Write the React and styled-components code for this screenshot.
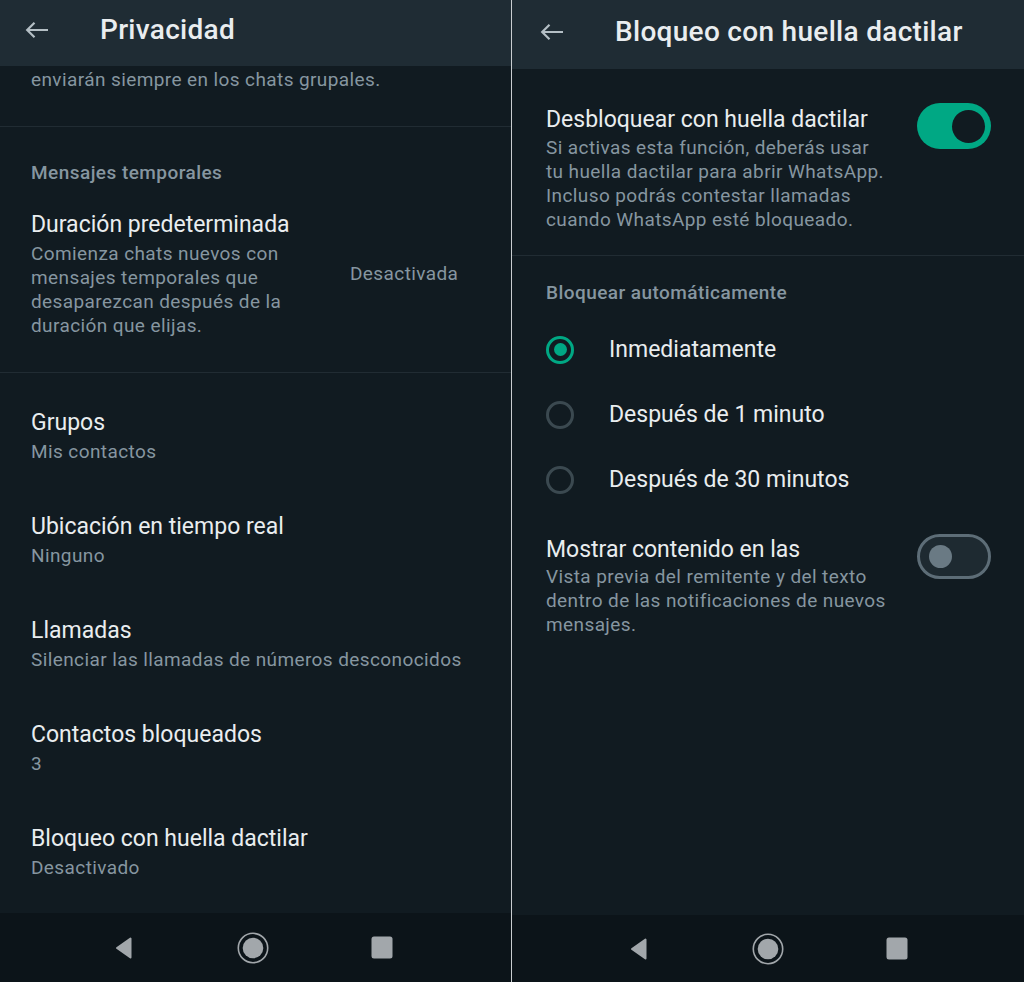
import React from "react";
import styled, { createGlobalStyle } from "styled-components";

const GlobalStyle = createGlobalStyle`
  html, body { margin: 0; padding: 0; background: #111b21; }
  body { font-family: Roboto, "Noto Sans", sans-serif; -webkit-font-smoothing: antialiased; }
`;

const Page = styled.div`
  display: flex;
  width: 1024px;
  height: 982px;
  overflow: hidden;
`;

const Screen = styled.div`
  display: flex;
  flex-direction: column;
  width: ${(p) => p.$w}px;
  flex: 0 0 ${(p) => p.$w}px;
  height: 100%;
  background: #111b21;
`;

const Seam = styled.div`
  flex: 0 0 1px;
  background: #c9cdd0;
`;

const AppBar = styled.header`
  display: flex;
  align-items: center;
  height: ${(p) => p.$h}px;
  flex: 0 0 ${(p) => p.$h}px;
  padding: 0 0 6px ${(p) => p.$pl}px;
  box-sizing: border-box;
  background: #1f2c34;
`;

const AppTitle = styled.h1`
  margin: 0 0 0 ${(p) => p.$gap}px;
  font-size: 28px;
  line-height: 34px;
  font-weight: 500;
  color: #e9edef;
  letter-spacing: 0.3px;
`;

const Body = styled.main`
  flex: 1;
  display: flex;
  flex-direction: column;
  overflow: hidden;
`;

const Rule = styled.div`
  height: 1px;
  background: #212c33;
`;

const Block = styled.section`
  padding: ${(p) => p.$pt}px ${(p) => p.$pr ?? p.$px}px ${(p) => p.$pb}px ${(p) => p.$px}px;
`;

const Secondary = styled.div`
  font-size: 19px;
  line-height: 24px;
  letter-spacing: 0.4px;
  color: #8696a0;
  margin-top: ${(p) => p.$mt || 0}px;
`;

const SectionLabel = styled.div`
  font-size: 19px;
  line-height: 24px;
  letter-spacing: 0.45px;
  font-weight: 500;
  color: #8696a0;
`;

const Primary = styled.div`
  font-size: 23px;
  line-height: 30px;
  color: #e9edef;
`;

const Row = styled.div`
  display: flex;
  align-items: ${(p) => p.$align || "center"};
  justify-content: space-between;
  margin-top: ${(p) => p.$mt || 0}px;
`;

const TextCol = styled.div`
  flex: 0 0 ${(p) => p.$w}px;
`;

const Value = styled.div`
  flex: 1;
  font-size: 19px;
  line-height: 24px;
  letter-spacing: 0.4px;
  color: #8696a0;
`;

const List = styled.div`
  padding-top: 11px;
`;

const ListItem = styled.div`
  padding: 24px 31px;
`;

const Options = styled.div`
  margin-top: 12px;
`;

const Track = styled.div`
  flex: 0 0 auto;
  display: flex;
  align-items: center;
  justify-content: ${(p) => (p.$on ? "flex-end" : "flex-start")};
  box-sizing: border-box;
  width: 74px;
  height: ${(p) => (p.$on ? 46 : 45)}px;
  border-radius: 23px;
  margin-top: ${(p) => p.$mt || 0}px;
  padding: ${(p) => (p.$on ? "0 6px" : "0 9px")};
  background: ${(p) => (p.$on ? "#00a884" : "#1e2a31")};
  border: ${(p) => (p.$on ? "none" : "3px solid #5d6d77")};
`;

const Knob = styled.div`
  width: ${(p) => (p.$on ? 33 : 23)}px;
  height: ${(p) => (p.$on ? 33 : 23)}px;
  border-radius: 50%;
  background: ${(p) => (p.$on ? "#111b21" : "#6a7a84")};
`;

const Toggle = ({ on, mt }) => (
  <Track $on={on} $mt={mt}>
    <Knob $on={on} />
  </Track>
);

const RadioRow = styled.div`
  display: flex;
  align-items: center;
  height: 65px;
  gap: 35px;
`;

const RadioRing = styled.div`
  box-sizing: border-box;
  width: 28px;
  height: 28px;
  border-radius: 50%;
  border: 3px solid ${(p) => (p.$on ? "#00a884" : "#3b4950")};
  display: flex;
  align-items: center;
  justify-content: center;
`;

const RadioDot = styled.div`
  width: 13px;
  height: 13px;
  border-radius: 50%;
  background: #00a884;
`;

const RadioLabel = styled.div`
  font-size: 23px;
  line-height: 30px;
  color: #e9edef;
`;

const NavBar = styled.nav`
  flex: 0 0 ${(p) => p.$h}px;
  height: ${(p) => p.$h}px;
  display: flex;
  align-items: center;
  justify-content: center;
  gap: 89px;
  padding-right: ${(p) => p.$shift || 0}px;
  box-sizing: border-box;
  background: #0c1419;
`;

const NavSlot = styled.div`
  width: 40px;
  height: 40px;
  display: flex;
  align-items: center;
  justify-content: center;
`;

const BackArrow = () => (
  <svg width="24" height="18" viewBox="0 0 24 18" fill="none">
    <path d="M23 9H2.5M9.5 1.8L2.2 9l7.3 7.2" stroke="#b4bfc5" strokeWidth="2.2" />
  </svg>
);

const NavBack = () => (
  <svg width="20" height="24" viewBox="0 0 20 24">
    <path
      d="M16.5 2.5v19L3 12z"
      fill="#a2a7ab"
      stroke="#a2a7ab"
      strokeWidth="2"
      strokeLinejoin="round"
    />
  </svg>
);

const NavHome = () => (
  <svg width="32" height="32" viewBox="0 0 32 32">
    <circle cx="16" cy="16" r="14.7" fill="none" stroke="#a2a7ab" strokeWidth="1.6" />
    <circle cx="16" cy="16" r="10.3" fill="#a2a7ab" />
  </svg>
);

const NavRecents = () => (
  <svg width="22" height="23" viewBox="0 0 22 23">
    <rect x="0.5" y="0.5" width="21" height="22" rx="2.5" fill="#a2a7ab" />
  </svg>
);

const SystemNav = ({ h, shift }) => (
  <NavBar $h={h} $shift={shift}>
    <NavSlot>
      <NavBack />
    </NavSlot>
    <NavSlot>
      <NavHome />
    </NavSlot>
    <NavSlot>
      <NavRecents />
    </NavSlot>
  </NavBar>
);

const privacyItems = [
  { title: "Grupos", sub: "Mis contactos" },
  { title: "Ubicación en tiempo real", sub: "Ninguno" },
  { title: "Llamadas", sub: "Silenciar las llamadas de números desconocidos" },
  { title: "Contactos bloqueados", sub: "3" },
  { title: "Bloqueo con huella dactilar", sub: "Desactivado" },
];

const lockOptions = ["Inmediatamente", "Después de 1 minuto", "Después de 30 minutos"];

const PrivacyScreen = () => (
  <Screen $w={511}>
    <AppBar $h={66} $pl={25}>
      <BackArrow />
      <AppTitle $gap={51}>Privacidad</AppTitle>
    </AppBar>
    <Body>
      <Block $pt={2} $pb={34} $px={31}>
        <Secondary>enviarán siempre en los chats grupales.</Secondary>
      </Block>
      <Rule />
      <Block $pt={34} $pb={34} $px={31}>
        <SectionLabel>Mensajes temporales</SectionLabel>
        <Row $mt={25}>
          <TextCol $w={319}>
            <Primary>Duración predeterminada</Primary>
            <Secondary $mt={2}>
              Comienza chats nuevos con
              <br />
              mensajes temporales que
              <br />
              desaparezcan después de la
              <br />
              duración que elijas.
            </Secondary>
          </TextCol>
          <Value>Desactivada</Value>
        </Row>
      </Block>
      <Rule />
      <List>
        {privacyItems.map((it) => (
          <ListItem key={it.title}>
            <Primary>{it.title}</Primary>
            <Secondary $mt={2}>{it.sub}</Secondary>
          </ListItem>
        ))}
      </List>
    </Body>
    <SystemNav h={69} shift={5} />
  </Screen>
);

const FingerprintScreen = () => {
  const [choice, setChoice] = React.useState(0);
  return (
    <Screen $w={512}>
      <AppBar $h={69} $pl={28}>
        <BackArrow />
        <AppTitle $gap={51}>Bloqueo con huella dactilar</AppTitle>
      </AppBar>
      <Body>
        <Block $pt={36} $pb={23} $px={34} $pr={33}>
          <Row $align="flex-start">
            <div>
              <Primary>Desbloquear con huella dactilar</Primary>
              <Secondary $mt={1}>
                Si activas esta función, deberás usar
                <br />
                tu huella dactilar para abrir WhatsApp.
                <br />
                Incluso podrás contestar llamadas
                <br />
                cuando WhatsApp esté bloqueado.
              </Secondary>
            </div>
            <Toggle on mt={-2} />
          </Row>
        </Block>
        <Rule />
        <Block $pt={25} $pb={0} $px={34}>
          <SectionLabel>Bloquear automáticamente</SectionLabel>
          <Options>
            {lockOptions.map((label, i) => (
              <RadioRow key={label} onClick={() => setChoice(i)}>
                <RadioRing $on={choice === i}>{choice === i && <RadioDot />}</RadioRing>
                <RadioLabel>{label}</RadioLabel>
              </RadioRow>
            ))}
          </Options>
        </Block>
        <Block $pt={23} $pb={0} $px={34} $pr={33}>
          <Row $align="flex-start">
            <div>
              <Primary>Mostrar contenido en las</Primary>
              <Secondary $mt={0}>
                Vista previa del remitente y del texto
                <br />
                dentro de las notificaciones de nuevos
                <br />
                mensajes.
              </Secondary>
            </div>
            <Toggle on={false} mt={-1} />
          </Row>
        </Block>
      </Body>
      <SystemNav h={67} shift={0} />
    </Screen>
  );
};

export default function App() {
  return (
    <>
      <GlobalStyle />
      <Page>
        <PrivacyScreen />
        <Seam />
        <FingerprintScreen />
      </Page>
    </>
  );
}
